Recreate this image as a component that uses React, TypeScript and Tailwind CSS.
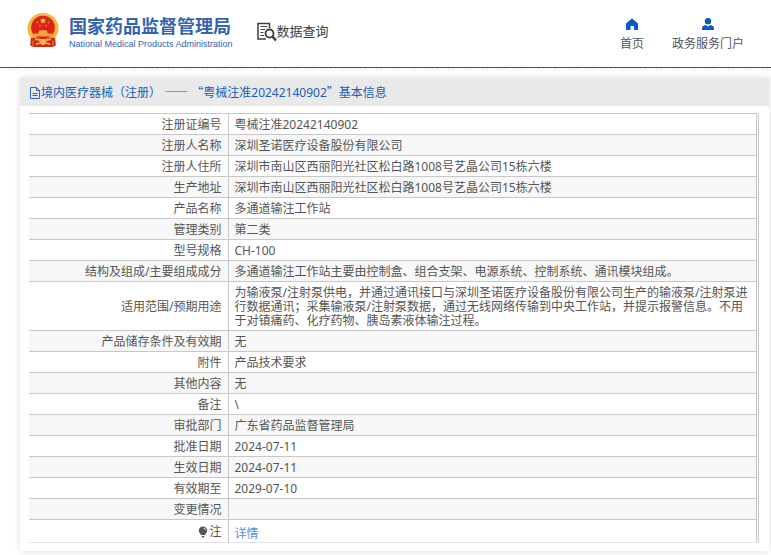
import type { ReactNode } from "react";

const rows = [
  { label: "注册证编号", value: "粤械注准20242140902" },
  { label: "注册人名称", value: "深圳圣诺医疗设备股份有限公司" },
  {
    label: "注册人住所",
    value: "深圳市南山区西丽阳光社区松白路1008号艺晶公司15栋六楼",
  },
  {
    label: "生产地址",
    value: "深圳市南山区西丽阳光社区松白路1008号艺晶公司15栋六楼",
  },
  { label: "产品名称", value: "多通道输注工作站" },
  { label: "管理类别", value: "第二类" },
  { label: "型号规格", value: "CH-100" },
  {
    label: "结构及组成/主要组成成分",
    value:
      "多通道输注工作站主要由控制盒、组合支架、电源系统、控制系统、通讯模块组成。",
  },
  {
    label: "适用范围/预期用途",
    value:
      "为输液泵/注射泵供电，并通过通讯接口与深圳圣诺医疗设备股份有限公司生产的输液泵/注射泵进行数据通讯；采集输液泵/注射泵数据，通过无线网络传输到中央工作站，并提示报警信息。不用于对镇痛药、化疗药物、胰岛素液体输注过程。",
  },
  { label: "产品储存条件及有效期", value: "无" },
  { label: "附件", value: "产品技术要求" },
  { label: "其他内容", value: "无" },
  { label: "备注", value: "\\" },
  { label: "审批部门", value: "广东省药品监督管理局" },
  { label: "批准日期", value: "2024-07-11" },
  { label: "生效日期", value: "2024-07-11" },
  { label: "有效期至", value: "2029-07-10" },
  { label: "变更情况", value: "" },
];

const Emblem = () => {
  return (
    <svg viewBox="0 0 32 35" className="h-[35px] w-8 shrink-0" aria-hidden="true">
      <path d="M4 24H28L28.5 32.5L25 34H7L3.5 32.5Z" fill="#d3261b" />
      <circle cx="16" cy="15.5" r="15.5" fill="#eeb33b" />
      <circle cx="16" cy="15.5" r="14" fill="none" stroke="#f6cf62" strokeWidth="1" strokeDasharray="2 1.5" />
      <circle cx="16" cy="14.5" r="11.8" fill="#dc2318" />
      <path d="M16 4.5l.9 2.2 2.4.1-1.9 1.5.7 2.3-2.1-1.3-2.1 1.3.7-2.3-1.9-1.5 2.4-.1z" fill="#f8d04a" />
      <g fill="#f2a53c">
        <circle cx="10.5" cy="9.5" r="0.8" />
        <circle cx="21.5" cy="9.5" r="0.8" />
        <circle cx="13" cy="12.8" r="0.8" />
        <circle cx="19" cy="12.8" r="0.8" />
        <path d="M11.5 19l1-1.8h7l1 1.8v1.5h4.5v3H7v-3h4.5z" />
      </g>
      <path d="M4 25Q10 24 13 27H19Q22 24 28 25L28.5 32.5L25 34H7L3.5 32.5Z" fill="#d3261b" />
      <path d="M8 26.5Q12 26 13.5 28.5H18.5Q20 26 24 26.5M9 31.5Q13 29 16 31.5Q19 29 23 31.5" stroke="#f0b43e" strokeWidth="1.5" fill="none" />
      <circle cx="16" cy="28.5" r="2.5" fill="#f3be4a" />
      <path d="M6 27.5V33M26 27.5V33" stroke="#f0a038" strokeWidth=".8" />
    </svg>
  );
};

const SearchDocIcon = () => {
  return (
    <svg viewBox="0 0 20 20" className="size-5" fill="none" stroke="#3d3d45" aria-hidden="true">
      <path d="M9 17H1V1.5H12.5V6" strokeWidth="1.5" />
      <path d="M3.5 4.5H10M3.5 7.5H8M3.5 10.5H6.5M3.5 13.5H7" strokeWidth="1" />
      <circle cx="12.5" cy="11.5" r="4" strokeWidth="1.8" />
      <path d="M15.5 14.5L19 18.5" strokeWidth="2.5" />
    </svg>
  );
};

const HomeIcon = () => {
  return (
    <svg viewBox="0 0 12 12" className="size-3" fill="#0b5bbd" aria-hidden="true">
      <path d="M6 .5L11 4.500Q12 5.500 12 6V12H8V8H4.500V12H0V6Q0 5.500 1 4.500Z" />
    </svg>
  );
};

const UserIcon = () => {
  return (
    <svg viewBox="0 0 12 12" className="size-3" fill="#0b5bbd" aria-hidden="true">
      <circle cx="6" cy="3.2" r="3.2" />
      <path d="M0 12V10.5Q0 7.5 3.5 7L6 8.500L8.500 7Q12 7.5 12 10.5V12Z" />
    </svg>
  );
};

const FileIcon = () => {
  return (
    <svg viewBox="0 0 11 12" className="h-3 w-[11px]" fill="none" stroke="#2467bd" aria-hidden="true">
      <path d="M.5 .5H6.5L9.5 3.5V11.5H.5ZM6.5 .5V3.5H9.5M2.5 6.5H7.5M2.5 8.5H7.5" />
    </svg>
  );
};

const BulbIcon = () => {
  return (
    <svg viewBox="0 0 10 12" className="h-3 w-2.5" fill="#555" aria-hidden="true">
      <path d="M5 .5a4.2 4.2 0 0 1 4.2 4.2C9.2 6.8 7.5 7.5 7 9H3C2.5 7.5 .8 6.8 .8 4.7A4.2 4.2 0 0 1 5 .5Z" />
      <path d="M3.5 10H6.5L5.8 11.5H4.2Z" />
      <path d="M5.5 2Q7.5 2.2 7.7 4.2" stroke="#fff" strokeWidth=".8" fill="none" />
    </svg>
  );
};

// dashes and quotes take a full-width cell, like the characters round them
const Wide = ({ children }: { children: ReactNode }) => {
  return (
    <span className="font-['Noto_Sans_CJK_SC',sans-serif]">{children}</span>
  );
};

const Header = () => {
  return (
    <header>
      <div className="flex h-[67px] items-start pr-[27px] pl-[27px]">
        <a href="#" className="flex items-start gap-2.5 pt-[13px]">
          <Emblem />
          <span className="flex flex-col pt-[3px] text-[#3463b0]">
            <span className="text-[18px] leading-5 font-bold">
              国家药品监督管理局
            </span>
            <span className="pt-0.5 font-['Liberation_Sans',sans-serif] text-[9px] leading-3">
              National Medical Products Administration
            </span>
          </span>
        </a>
        <a
          href="#"
          className="ml-6 flex items-start pt-[22px] text-[13px] leading-[18px] text-[#3d3d45]"
        >
          <SearchDocIcon />
          数据查询
        </a>
        <nav className="ml-auto flex gap-7 pt-[18px] text-xs leading-4 text-[#555]">
          <a href="#" className="flex flex-col items-center gap-1.5">
            <HomeIcon />
            首页
          </a>
          <a href="#" className="flex flex-col items-center gap-1.5">
            <UserIcon />
            政务服务门户
          </a>
        </nav>
      </div>
      <div className="h-px bg-[#1b5f8f]" />
      <div className="h-[3px] bg-[repeating-linear-gradient(135deg,#ececec_0px,#ececec_1px,#fff_1px,#fff_3px)]" />
    </header>
  );
};

const App = () => {
  return (
    <div
      lang="zh-CN"
      className="bg-white font-['Noto_Sans','Noto_Sans_CJK_SC',sans-serif] text-xs text-[#555]"
    >
      <Header />
      <main className="pt-[7px] pr-0.5 pb-1 pl-5">
        <section className="bg-white pb-2 shadow-[0_0_6px_rgba(0,0,0,0.15)]">
          <h1 className="flex h-7 items-center bg-[#e9e9e9] pt-px pl-2.5 leading-4 text-[#1a5fb8]">
            <FileIcon />
            <span>
              境内医疗器械（注册） <Wide>——</Wide> <Wide>“</Wide>
              粤械注准20242140902<Wide>”</Wide>基本信息
            </span>
          </h1>
          <div className="pt-[7px] pr-2.5 pl-[9px]">
            <div className="border-r border-[#c8c8c8] pr-px">
              <table className="w-full border-collapse border-t border-r border-[#c8c8c8] leading-[14px]">
                <tbody>
                  {rows.map((row) => (
                    <tr
                      key={row.label}
                      className="border-b border-[#c8c8c8] even:bg-[#f7f7f7]"
                    >
                      <th
                        scope="row"
                        className="h-[21px] w-[199px] border-r border-[#c8c8c8] pt-1 pr-1.5 pb-0.5 text-right font-normal"
                      >
                        {row.label}
                      </th>
                      <td className="px-1.5 pt-1 pb-0.5">{row.value}</td>
                    </tr>
                  ))}
                  <tr className="border-b border-[#e4e4e4]">
                    <th
                      scope="row"
                      className="h-[23px] border-r border-[#c8c8c8] pt-0.5 pr-1.5 font-normal"
                    >
                      <span className="flex items-center justify-end gap-px">
                        <BulbIcon />注
                      </span>
                    </th>
                    <td className="px-1.5 pt-1.5">
                      <a href="#" className="text-[#4a94e6]">
                        详情
                      </a>
                    </td>
                  </tr>
                </tbody>
              </table>
            </div>
          </div>
        </section>
      </main>
    </div>
  );
};

export default App;
